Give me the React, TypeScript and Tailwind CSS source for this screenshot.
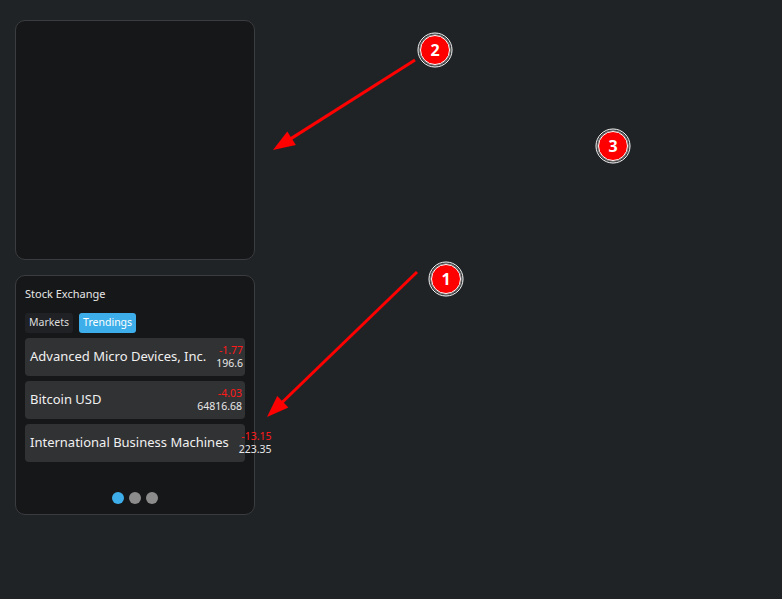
import React from "react"

const rows = [
  { name: "Advanced Micro Devices, Inc.", change: "-1.77", price: "196.6" },
  { name: "Bitcoin USD", change: "-4.03", price: "64816.68" },
  { name: "International Business Machines", change: "-13.15", price: "223.35" },
]

function Marker({ x, y, n }: { x: number; y: number; n: string }) {
  return (
    <g>
      <circle cx={x} cy={y} r={17} fill="none" stroke="#ffffff" strokeWidth={1} />
      <circle cx={x} cy={y} r={15.5} fill="none" stroke="#777" strokeWidth={1} />
      <circle cx={x} cy={y} r={14.5} fill="#ff0000" stroke="#ffffff" strokeWidth={1} />
      <text
        x={x}
        y={y + 5.5}
        textAnchor="middle"
        fontSize="16"
        fontWeight="700"
        fill="#ffffff"
        fontFamily="'Open Sans', 'Noto Sans', sans-serif"
      >
        {n}
      </text>
    </g>
  )
}

function Arrow({ x1, y1, x2, y2 }: { x1: number; y1: number; x2: number; y2: number }) {
  const dx = x2 - x1
  const dy = y2 - y1
  const len = Math.sqrt(dx * dx + dy * dy)
  const ux = dx / len
  const uy = dy / len
  const head = 22
  const half = 8
  const bx = x2 - ux * head
  const by = y2 - uy * head
  const p1 = `${bx - uy * half},${by + ux * half}`
  const p2 = `${bx + uy * half},${by - ux * half}`
  return (
    <g>
      <line x1={x1} y1={y1} x2={bx + ux * 4} y2={by + uy * 4} stroke="#ff0000" strokeWidth={3} />
      <polygon points={`${x2},${y2} ${p1} ${p2}`} fill="#ff0000" />
    </g>
  )
}

export default function App() {
  return (
    <div className="relative h-screen w-full overflow-hidden bg-[#202326] font-['Noto_Sans','Open_Sans',sans-serif]">
      <div className="flex flex-col gap-[15px] pl-[15px] pt-[20px]">
        {/* empty card */}
        <div className="w-[240px] h-[240px] rounded-[10px] border border-[#3a3c3f] bg-[#161719]" />

        {/* stock exchange */}
        <div className="w-[240px] h-[240px] rounded-[10px] border border-[#3a3c3f] bg-[#161719] px-[9px] pt-[10px] pb-[10px] flex flex-col">
          <div className="text-[11px] leading-[16px] text-[#e6e6e6]">Stock Exchange</div>

          <div className="mt-[11px] flex gap-[6px] text-[10.5px]">
            <div className="h-[20px] px-[4px] flex items-center rounded-[3px] bg-[#1f2124] text-[#dcdcdc]">Markets</div>
            <div className="h-[20px] px-[4px] flex items-center rounded-[3px] bg-[#3daee9] text-white">Trendings</div>
          </div>

          <div className="mt-[5px] flex flex-col gap-[5px]">
            {rows.map((r) => (
              <div
                key={r.name}
                className="h-[38px] w-[220px] rounded-[4px] bg-[#313234] pl-[5px] pr-[3px] flex items-center justify-between"
              >
                <span className="whitespace-nowrap shrink-0 text-[13px] text-[#f0f0f0] mr-[10px]">{r.name}</span>
                <div className="shrink-0 flex flex-col items-end text-[10.5px] leading-[13px]">
                  <span className="text-[#ff1a1a]">{r.change}</span>
                  <span className="text-[#e8e8e8]">{r.price}</span>
                </div>
              </div>
            ))}
          </div>

          <div className="flex-1" />
          <div className="flex justify-center gap-[5px]">
            <span className="w-[12px] h-[12px] rounded-full bg-[#3daee9]" />
            <span className="w-[12px] h-[12px] rounded-full bg-[#8c8c8c]" />
            <span className="w-[12px] h-[12px] rounded-full bg-[#8c8c8c]" />
          </div>
        </div>
      </div>

      {/* annotations */}
      <svg className="absolute inset-0 pointer-events-none" width="782" height="599" viewBox="0 0 782 599">
        <Arrow x1={415} y1={60} x2={273} y2={150} />
        <Arrow x1={417} y1={272} x2={267} y2={417} />
        <Marker x={435} y={50} n="2" />
        <Marker x={446} y={279} n="1" />
        <Marker x={613} y={146} n="3" />
      </svg>
    </div>
  )
}
